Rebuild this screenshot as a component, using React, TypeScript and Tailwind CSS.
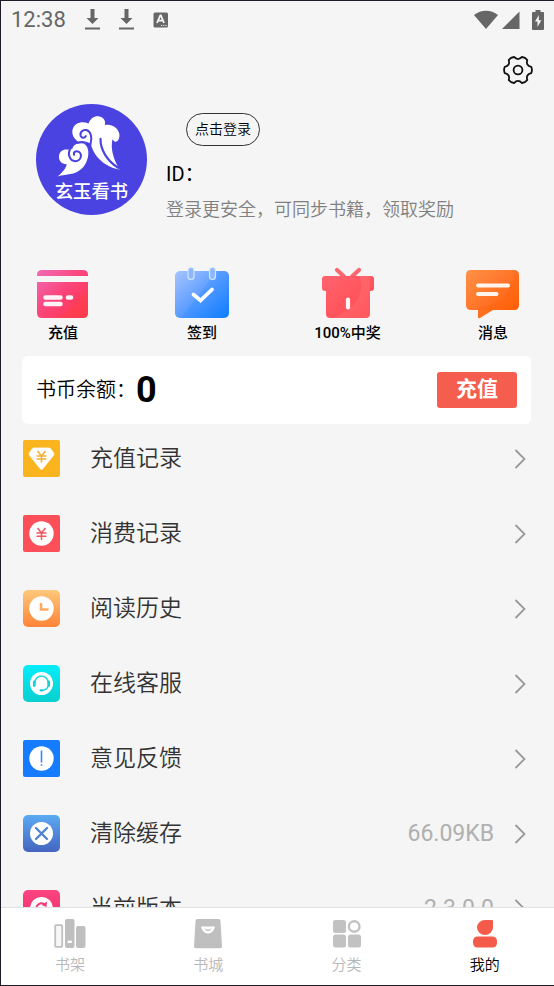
import type { ReactNode } from "react";

const polar = (r: number, deg: number) => {
  const a = (deg * Math.PI) / 180;
  return `${(r * Math.cos(a)).toFixed(2)} ${(r * Math.sin(a)).toFixed(2)}`;
};

const gearPath =
  [0, 60, 120, 180, 240, 300]
    .map(
      (t, i) =>
        `${i === 0 ? "M" : "L"}${polar(13.6, t - 13)} Q${polar(14.6, t)} ${polar(13.6, t + 13)} Q${polar(8.8, t + 30)} ${polar(13.6, t + 47)}`,
    )
    .join(" ") + "Z";

function GearIcon() {
  return (
    <svg viewBox="-16 -16 32 32" className="h-8 w-8" fill="none" stroke="#111" strokeWidth="1.8" strokeLinejoin="round">
      <path d={gearPath} />
      <circle r="4.4" />
    </svg>
  );
}

function DownloadIcon() {
  return (
    <svg viewBox="0 0 15 22" className="h-[22px] w-[15px]" fill="#666">
      <path d="M5.500 0h4v9h4l-6 6-6-6h4zM0 18.500h15v2H0z" />
    </svg>
  );
}

function StatusBar() {
  return (
    <div className="flex h-[38px] items-center justify-between pr-2.5 pl-2.5">
      <div className="flex items-center">
        <span className="text-[22px] leading-none text-[#666]">12:38</span>
        <span className="ml-[19px] flex items-center gap-[19px]">
          <DownloadIcon />
          <DownloadIcon />
          <svg viewBox="0 0 16 16" className="h-4 w-4">
            <rect x="0.5" y="0.5" width="14.5" height="15" rx="1.5" fill="#666" />
            <path d="M4 11 7.300 3.500h.600L11 11M5.200 8.600h4.800" fill="none" stroke="#f5f5f5" strokeWidth="1.800" />
            <path d="M8 13.400h6" stroke="#f5f5f5" strokeWidth="1" strokeDasharray="1.2 1" />
          </svg>
        </span>
      </div>
      <div className="flex items-center">
        <svg viewBox="0 0 24 20" className="h-5 w-6" fill="#666">
          <path d="M0 5C7-.7 17-.7 24 5L12 19z" />
        </svg>
        <svg viewBox="0 0 18 18" className="ml-1 h-[18px] w-[18px]" fill="#666">
          <path d="M17.5 0.5V18H0z" />
        </svg>
        <svg viewBox="0 0 12 20" className="ml-3 h-5 w-3">
          <path d="M3.500 0h5v2H11q1 0 1 1v16q0 1-1 1H1q-1 0-1-1V3q0-1 1-1h2.500z" fill="#666" />
          <path d="M6.800 5 3 11.500h2.500V17L9.300 10.200H6.800z" fill="#f5f5f5" />
        </svg>
      </div>
    </div>
  );
}

function Avatar() {
  return (
    <svg viewBox="49 42 332 332" className="h-[111px] w-[111px] shrink-0" role="img" aria-label="玄玉看书">
      <circle cx="215" cy="208" r="166" fill="#4a43e2" />
      <g transform="translate(96 66)">
        <g fill="#fff">
          <path d="M78 88C64 78 58 62 64 48C71 31 92 26 110 34C116 20 126 12 140 13C155 15 162 26 159 39C178 34 198 46 202 64C204 78 199 88 191 89C186 89 184 85 182 81C175 108 184 142 203 172C166 166 126 138 117 94C108 96 90 96 78 88Z" />
          <path d="M17 193C29 184 42 170 45 156C28 156 20 144 22 130C25 116 37 110 49 113C53 108 56 108 61 112C64 98 77 91 90 93C105 96 112 112 109 131C105 158 88 178 64 184C47 188 31 188 17 193Z" />
        </g>
        <g fill="none" stroke="#4a43e2" strokeLinecap="round" strokeLinejoin="round">
          <path d="M116 96C122 76 117 58 104 54C92 51 83 62 87 72C90 79 99 79 102 72" strokeWidth="6" />
          <path d="M78 92C88 88 106 91 113 97" strokeWidth="7" />
          <path d="M146 80C145 112 165 145 199 167" strokeWidth="6.500" />
          <path d="M55 109C47 126 53 147 71 147C87 146 93 128 81 119C73 114 64 120 67 128" strokeWidth="6" />
        </g>
      </g>
      <text
        x="215"
        y="323"
        textAnchor="middle"
        fill="#fff"
        fontSize="55"
        fontWeight="500"
        fontFamily='"Noto Sans CJK SC", sans-serif'
      >
        玄玉看书
      </text>
    </svg>
  );
}

const shortcuts: { label: string; icon: ReactNode }[] = [
  {
    label: "充值",
    icon: (
      <svg viewBox="0 0 54 54" className="h-[54px] w-[54px]">
        <defs>
          <linearGradient id="card" x1="0" y1="0" x2="1" y2="1">
            <stop offset="0" stopColor="#f06cb8" />
            <stop offset="0.5" stopColor="#fb4377" />
            <stop offset="1" stopColor="#ff3548" />
          </linearGradient>
        </defs>
        <path d="M1 10V9q0-5 5-5h41q5 0 5 5v1zM1 16h51v31q0 5-5 5H6q-5 0-5-5z" fill="url(#card)" />
        <path d="M52 24 24 52h23q5 0 5-5z" fill="#ff3f4c" opacity="0.600" />
        <path d="M9.500 31.500h15M9.500 38h15M32 31.500h3" stroke="#fff4f8" strokeWidth="4.500" strokeLinecap="round" />
      </svg>
    ),
  },
  {
    label: "签到",
    icon: (
      <svg viewBox="0 0 54 54" className="h-[54px] w-[54px]">
        <defs>
          <linearGradient id="cal" x1="0" y1="0" x2="1" y2="1">
            <stop offset="0" stopColor="#a9c4ff" />
            <stop offset="0.5" stopColor="#5d9eff" />
            <stop offset="1" stopColor="#087bff" />
          </linearGradient>
        </defs>
        <rect x="0" y="5" width="54" height="47" rx="5" fill="url(#cal)" />
        <path d="M42 5h7q5 0 5 5v37q0 5-5 5H6z" fill="#1f86ff" opacity="0.220" />
        <rect x="13" y="1.500" width="6" height="12" rx="3" fill="#8db8ff" stroke="#d5e5ff" strokeWidth="1.200" />
        <rect x="34.500" y="1.500" width="6" height="12" rx="3" fill="#8db8ff" stroke="#d5e5ff" strokeWidth="1.200" />
        <path d="m18.500 28.500 7 6 11.500-11" fill="none" stroke="#fff" strokeWidth="3.800" strokeLinecap="round" />
      </svg>
    ),
  },
  {
    label: "100%中奖",
    icon: (
      <svg viewBox="0 0 54 54" className="h-[54px] w-[54px]">
        <defs>
          <linearGradient id="gift" x1="0" y1="0" x2="1" y2="1">
            <stop offset="0" stopColor="#ff6370" />
            <stop offset="1" stopColor="#ff4a4d" />
          </linearGradient>
        </defs>
        <path d="m16 4 7 6.500M38 4l-7 6.500" stroke="#fa686f" strokeWidth="4.200" strokeLinecap="round" />
        <path d="M4 10h46q3 0 3 3v9q0 3-3 3h-1v23q0 4-4 4H9q-4 0-4-4V25H4q-3 0-3-3v-9q0-3 3-3z" fill="url(#gift)" />
        <path d="M49 10H38c6 14 0 31-25 42h32q4 0 4-4z" fill="#fff" opacity="0.080" />
        <path d="M27 33.500v8" stroke="#fff5f5" strokeWidth="4.200" strokeLinecap="round" />
      </svg>
    ),
  },
  {
    label: "消息",
    icon: (
      <svg viewBox="0 0 54 54" className="h-[54px] w-[54px]">
        <defs>
          <linearGradient id="msg" x1="0" y1="0" x2="1" y2="1">
            <stop offset="0" stopColor="#ff9148" />
            <stop offset="0.500" stopColor="#ff7428" />
            <stop offset="1" stopColor="#ff5d00" />
          </linearGradient>
        </defs>
        <path d="M5 4h43q5 0 5 5v30q0 5-5 5H27L14 52q-2 1-2-1v-7H5q-5 0-5-5V9q0-5 5-5z" fill="url(#msg)" />
        <path d="M49 4c1 18-16 35-42 40h41q5 0 5-5V9z" fill="#ff5a00" opacity="0.200" />
        <path d="M12 19.500h30M12 28h18.500" stroke="#fff5ec" strokeWidth="4" strokeLinecap="round" />
      </svg>
    ),
  },
];

function Tile({ id, from, to, radius, children }: { id: string; from: string; to: string; radius: number; children: ReactNode }) {
  return (
    <svg viewBox="-18.500 -18.500 37 37" className="h-[37px] w-[37px] shrink-0">
      <defs>
        <linearGradient id={id} x1="0" y1="0" x2="0" y2="1">
          <stop offset="0" stopColor={from} />
          <stop offset="1" stopColor={to} />
        </linearGradient>
      </defs>
      <rect x="-18.500" y="-18.500" width="37" height="37" rx={radius} fill={`url(#${id})`} />
      {children}
    </svg>
  );
}

const rows: { label: string; value?: string; icon: ReactNode }[] = [
  {
    label: "充值记录",
    icon: (
      <Tile id="r1" from="#fab41d" to="#fab41d" radius={2}>
        <path
          d="M-7.500-10.500h15q1 0 1.600.800l3 4.200q.800 1.200-.100 2.300L1 10.500Q0 11.500-1 10.500l-11-13.700q-.900-1.100-.100-2.300l3-4.200q.600-.800 1.600-.800z"
          fill="#fff"
          stroke="#fff"
          strokeWidth="0.800"
        />
        <path d="M-4-7.500 0-2.500 4-7.500M-5-2.500H5M-5 .500H5M0-2.500V4" fill="none" stroke="#f2b13a" strokeWidth="1.600" />
      </Tile>
    ),
  },
  {
    label: "消费记录",
    icon: (
      <Tile id="r2" from="#fd4f5a" to="#fd4f5a" radius={2}>
        <circle r="12.200" fill="#fff" />
        <path d="M-4-5.500 0-.500 4-5.500M-5-.500H5M-5 2.800H5M0-.500V6.500" fill="none" stroke="#ee5960" strokeWidth="1.500" />
      </Tile>
    ),
  },
  {
    label: "阅读历史",
    icon: (
      <Tile id="r3" from="#fdc87a" to="#ff8438" radius={5}>
        <circle r="12.200" fill="#fff" />
        <path d="M-.500-5.500V1H7" fill="none" stroke="#ffab60" strokeWidth="2.600" />
      </Tile>
    ),
  },
  {
    label: "在线客服",
    icon: (
      <Tile id="r4" from="#06edfa" to="#08cfcf" radius={5}>
        <circle r="11.500" fill="#fff" />
        <path d="M-6.500-1a6.500 6.500 0 0 1 13 0M6.800 2C6 5 4 6.500 1 6.800" fill="none" stroke="#2cd8dc" strokeWidth="1.500" />
        <path d="M-7.200-1.500v3.600M7.200-1.500v3.600" stroke="#18cfd5" strokeWidth="2.800" strokeLinecap="round" />
        <path d="M-1 6.800h2" stroke="#18cfd5" strokeWidth="2.200" strokeLinecap="round" />
      </Tile>
    ),
  },
  {
    label: "意见反馈",
    icon: (
      <Tile id="r5" from="#167cff" to="#167cff" radius={2}>
        <circle r="12.200" fill="#fff" />
        <path d="M0-8V4M0 5.700v1.600" stroke="#3989f5" strokeWidth="1.600" />
      </Tile>
    ),
  },
  {
    label: "清除缓存",
    value: "66.09KB",
    icon: (
      <Tile id="r6" from="#5caaf3" to="#4465c0" radius={5}>
        <circle r="11.500" fill="#fff" />
        <path d="m-5.500-5.500 11 11m0-11-11 11" stroke="#4e83d2" strokeWidth="2.300" strokeLinecap="round" />
      </Tile>
    ),
  },
  {
    label: "当前版本",
    value: "2.3.0.0",
    icon: (
      <Tile id="r7" from="#fb4481" to="#ee2e68" radius={5}>
        <circle r="11.500" fill="#fff" />
        <path d="M-5 1a5 5 0 0 1 8-5M5-1a5 5 0 0 1-8 5" fill="none" stroke="#f23e78" strokeWidth="2" />
        <path d="M5.500-7 5-1.500 0-3.500zM-5.500 7-5 1.500 0 3.500z" fill="#f23e78" />
      </Tile>
    ),
  },
];

const tabs: { label: string; active?: boolean; icon: ReactNode }[] = [
  {
    label: "书架",
    icon: (
      <svg viewBox="0 0 32 30" className="h-[30px] w-8" fill="#bfbfbf">
        <rect x="1.200" y="6.200" width="7" height="21.600" rx="0.800" fill="#f7f7f7" stroke="#c0c0c0" strokeWidth="1.800" />
        <rect x="11" y="0" width="9.500" height="29" rx="2" />
        <rect x="22" y="7" width="9.500" height="22" rx="2" />
        <rect x="13.500" y="21.500" width="4.500" height="2.600" rx="1" fill="#fff" />
      </svg>
    ),
  },
  {
    label: "书城",
    icon: (
      <svg viewBox="0 0 28 30" className="h-[30px] w-7">
        <path d="M3.500 0h21q2 0 2 2L28 27.500q0 1.800-2 1.800H2q-2 0-2-1.800L1.500 2q0-2 2-2z" fill="#bfbfbf" />
        <path d="M7 7.500h14c-1 4.500-4 7-7 7s-6-2.500-7-7z" fill="#fff" />
        <path d="M9.500 8.500 12.500 12h3l3-3.500L16 10.500h-4z" fill="#bfbfbf" />
      </svg>
    ),
  },
  {
    label: "分类",
    icon: (
      <svg viewBox="0 0 28 30" className="h-[30px] w-7" fill="#c2c2c2">
        <rect x="0" y="1" width="13" height="13" rx="2.500" />
        <rect x="0" y="15.500" width="13" height="13" rx="2.500" />
        <rect x="15" y="15.500" width="13" height="13" rx="2.500" />
        <circle cx="21.200" cy="7.500" r="5.300" fill="none" stroke="#c2c2c2" strokeWidth="2.400" />
      </svg>
    ),
  },
  {
    label: "我的",
    active: true,
    icon: (
      <svg viewBox="0 0 24 30" className="h-[30px] w-6" fill="#f55b4b">
        <path d="M12 1h7q1 0 1 1v6.500a8 7.500 0 1 1-8-7.500z" />
        <rect x="0" y="17.500" width="24" height="11" rx="4.500" />
      </svg>
    ),
  },
];

export default function App() {
  return (
    <div className="flex h-screen flex-col overflow-hidden border-y border-l border-[#1e1a26] bg-[#f5f5f5] font-[Roboto,'Noto_Sans_CJK_SC',sans-serif] text-black">
      <StatusBar />
      <main className="flex min-h-0 flex-1 flex-col overflow-y-auto [scrollbar-width:none]">
        <div className="flex shrink-0 justify-end pt-[15px] pr-5">
          <button type="button" aria-label="设置">
            <GearIcon />
          </button>
        </div>

        <section className="flex shrink-0 gap-[19px] pt-[18px] pl-[35px]">
          <Avatar />
          <div className="flex flex-col items-start pt-[9px]">
            <button type="button" className="ml-5 h-[33px] rounded-full border border-[#333] px-2 pb-0.5 text-sm leading-none font-[350]">
              点击登录
            </button>
            <p className="mt-3.5 text-xl leading-7">ID：</p>
            <p className="mt-2 text-lg leading-7 font-[350] whitespace-nowrap text-[#808080]">登录更安全，可同步书籍，领取奖励</p>
          </div>
        </section>

        <section className="flex shrink-0 justify-between pt-[42px] pr-[34px] pl-[35px]">
          {shortcuts.map((s) => (
            <button key={s.label} type="button" className="flex flex-col items-center">
              {s.icon}
              <span className="text-[15px] leading-[26px] font-medium">{s.label}</span>
            </button>
          ))}
        </section>

        <section className="mt-2.5 mr-[23px] ml-[21px] flex h-[68px] shrink-0 items-center rounded-md bg-white pr-3.5 pl-3.5">
          <span className="text-xl leading-none font-[350]">书币余额：</span>
          <strong className="text-4xl leading-none">0</strong>
          <button type="button" className="ml-auto h-9 w-20 rounded-[3px] bg-[#f55d4e] pb-0.5 text-[21px] leading-none font-bold text-white">
            充值
          </button>
        </section>

        <ul className="-mt-[3px] shrink-0">
          {rows.map((r) => (
            <li key={r.label}>
              <button type="button" className="flex h-[75px] w-full items-center pr-7 pl-[22px] text-[23px] leading-none">
                {r.icon}
                <span className="ml-[30px] font-[350] text-[#333]">{r.label}</span>
                <span className="ml-auto text-[#b0b0b0]">{r.value}</span>
                <svg viewBox="0 0 12 20" className="ml-5 h-5 w-3" fill="none" stroke="#999" strokeWidth="1.800">
                  <path d="m1.500 1 9 9-9 9" />
                </svg>
              </button>
            </li>
          ))}
        </ul>
      </main>

      <nav className="grid h-[78px] shrink-0 grid-cols-4 border-t border-[#e2e2e2] bg-white">
        {tabs.map((t) => (
          <a
            key={t.label}
            href="#"
            aria-current={t.active ? "page" : undefined}
            className={`flex flex-col items-center pt-[11px] text-[15px] leading-8 font-[350] ${t.active ? "text-black" : "text-[#b8b8b8]"}`}
          >
            {t.icon}
            {t.label}
          </a>
        ))}
      </nav>
    </div>
  );
}
